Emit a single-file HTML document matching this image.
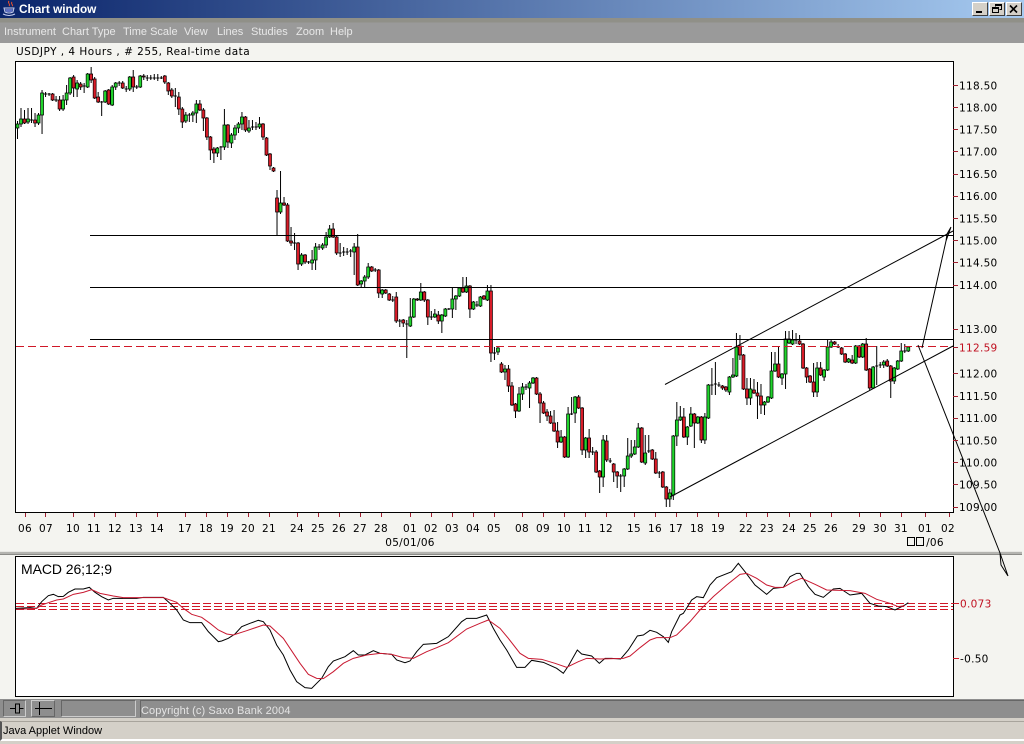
<!DOCTYPE html>
<html><head><meta charset="utf-8"><title>Chart window</title>
<style>
html,body{margin:0;padding:0;width:1024px;height:744px;overflow:hidden;background:#f4f4f0}
body{position:relative;font-family:"Liberation Sans",sans-serif}
.a{position:absolute;box-sizing:border-box}
.m{position:absolute;top:25px;font-size:11px;line-height:14px;color:#e8e8e8;white-space:nowrap}
.wb{position:absolute;top:2px;width:16px;height:14px;background:#d4d0c8;border:1px solid;border-color:#fff #404040 #404040 #fff;box-sizing:border-box}
svg{position:absolute;left:0;top:0}
</style></head>
<body>
<div class="a" style="left:0;top:0;width:1024px;height:18px;background:linear-gradient(90deg,#0a246a 0%,#a6caf0 100%)"></div>
<svg width="18" height="18" style="left:1px;top:0"><path d="M8 1c-2 2 2 3 0 5M11 2c-2 2 2 3 0 4" stroke="#e05030" fill="none"/><path d="M3 8h10l-1 4q-4 2-8 0zM2 14q6 3 12 0" fill="none" stroke="#c8d0f0"/><path d="M4 9h8l-1 3h-6z" fill="#6070c0"/></svg>
<div class="a" style="left:19px;top:2px;font-size:11.800px;line-height:14px;font-weight:bold;color:#fff;white-space:nowrap">Chart window</div>
<div class="wb" style="left:972px"><svg width="14" height="12"><path d="M3 9h6" stroke="#000" stroke-width="2"/></svg></div>
<div class="wb" style="left:989px"><svg width="14" height="12"><path d="M5.5 3.5V1.500h6v5h-2M2.500 4.500h6v5h-6zM2.500 5.500h6M5.500 2.500h6" fill="none" stroke="#000"/></svg></div>
<div class="wb" style="left:1006px"><svg width="14" height="12"><path d="M3 2.500l7 7M10 2.500l-7 7" stroke="#000" stroke-width="1.600"/></svg></div>
<div class="a" style="left:0;top:18px;width:1024px;height:25px;background:linear-gradient(180deg,#909088 0,#909088 4px,#9a9a9a 5px,#9a9a9a 100%)"></div>
<div class="m" style="left:4px">Instrument</div>
<div class="m" style="left:62px">Chart Type</div>
<div class="m" style="left:123px">Time Scale</div>
<div class="m" style="left:184px">View</div>
<div class="m" style="left:217px">Lines</div>
<div class="m" style="left:251px">Studies</div>
<div class="m" style="left:296px">Zoom</div>
<div class="m" style="left:330px">Help</div>

<div class="a" style="left:15px;top:61px;width:939px;height:452px;background:#fff;border:1px solid #000"></div>
<div class="a" style="left:0;top:551px;width:1022px;height:4px;background:#b4b4b0;border-top:1px solid #e8e8e4;border-bottom:1px solid #8c8c88"></div>
<div class="a" style="left:15px;top:556px;width:939px;height:141px;background:#fff;border:1px solid #000"></div>

<div class="a" style="left:0;top:699px;width:1024px;height:19px;background:#8e8e8e"></div>
<div class="a" style="left:3px;top:700px;width:23px;height:17px;border:1px solid;border-color:#666 #ccc #ccc #666"></div>
<div class="a" style="left:31px;top:700px;width:24px;height:17px;border:1px solid;border-color:#ccc #666 #666 #ccc"></div>
<div class="a" style="left:61px;top:700px;width:75px;height:17px;border:1px solid;border-color:#666 #ccc #ccc #666"></div>
<div class="a" style="left:140px;top:700px;width:884px;height:17px;border-left:1px solid #666;border-top:1px solid #666"></div>
<svg width="60" height="20" style="left:0;top:698px"><path d="M10 10.500h5M15.500 6v9h4v-9zM19.500 10.500h4" fill="none" stroke="#000"/><path d="M35 10.500h17M39.500 4v13" fill="none" stroke="#000"/></svg>
<div class="a" style="left:141px;top:704px;font-size:11px;line-height:14px;color:#e4e4e4;white-space:nowrap;letter-spacing:.1px">Copyright (c) Saxo Bank 2004</div>
<div class="a" style="left:0;top:718px;width:1024px;height:26px;background:#d4d0c8"></div>
<div class="a" style="left:0;top:721px;width:1024px;height:20px;background:#d4d0c8;border-left:2px solid #555;border-top:1px solid #a8a49c;border-bottom:2px solid #fff"></div>
<div class="a" style="left:3px;top:724px;font-size:11px;line-height:14px;color:#000;white-space:nowrap">Java Applet Window</div>

<svg width="1024" height="744" viewBox="0 0 1024 744">
<g font-family="'DejaVu Sans',sans-serif" font-size="10.5" fill="#000" letter-spacing=".3">
<text x="16" y="55" textLength="234" lengthAdjust="spacing">USDJPY , 4 Hours , # 255, Real-time data</text>
</g>
<g transform="translate(17.5 0) scale(1.002 1)" stroke="#000" stroke-width="1">
<path fill="none" d="M0 121V139M3.500 108V127M7 110V124M10.500 108V124M14 108V123M12.500 120h3M17.500 113V127M21 113V125M24.500 90V134M28 92V97M26.500 94h3M31.500 93V96M30 94h3M35 93V101M38.500 96V102M37 100h3M42 96V111M45.500 95V111M49 85V105M52.500 77V95M56 75V97M59.500 80V97M63 82V90M66.500 83V93M65 86h3M70 73V88M73.500 67V83M77 77V99M80.500 92V103M84 101V116M82.500 102h3M87.500 90V103M91 89V105M94.500 85V106M98 82V90M101.500 81V86M100 83h3M105 81V89M108.500 86V92M107 89h3M112 76V91M115.500 70V92M119 85V89M117.500 87h3M122.500 75V88M126 74V80M129.500 75V81M128 78h3M133 75V80M131.500 78h3M136.500 74V80M135 78h3M140 74V81M138.500 78h3M143.500 76V79M142 78h3M147 75V84M150.500 82V95M154 88V98M157.500 88V107M156 96h3M161 92V115M164.500 107V128M168 112V123M171.500 113V122M170 115h3M175 111V122M178.500 100V123M182 100V111M185.500 108V131M189 117V140M192.500 136V160M196 147V163M199.500 147V157M203 146V160M201.500 147h3M206.500 109V150M210 124V148M213.500 133V148M217 125V140M220.500 122V133M224 112V130M227.500 116V132M231 120V133M234.500 120V130M233 127h3M238 122V130M236.500 127h3M241.500 117V129M245 123V140M248.500 137V156M252 153V170M255.500 167V172M259 190V235M262.500 171V214M266 197V206M269.500 203V242M273 227V246M276.500 233V250M275 243h3M280 242V270M283.500 253V266M287 254V264M290.500 261V264M289 262h3M294 250V270M297.500 243V270M301 244V250M299.500 247h3M304.500 243V250M308 232V248M311.500 225V238M315 223V238M318.500 236V255M322 243V257M320.500 253h3M325.500 247V256M324 252h3M329 248V255M327.500 252h3M332.500 249V257M331 251h3M336 243V275M339.500 234V286M343 280V288M346.500 275V287M350 263V279M353.500 266V272M357 268V272M355.500 270h3M360.500 269V298M364 289V298M367.500 289V294M371 293V301M374.500 296V302M373 300h3M378 292V323M381.500 319V327M380 321h3M385 319V327M388.500 320V358M387 324h3M392 298V327M395.500 298V318M399 298V301M402.500 283V301M406 291V302M409.500 299V325M413 311V320M411.500 317h3M416.500 309V318M420 311V324M423.500 314V333M427 308V317M430.500 308V310M429 309h3M434 288V318M437.500 295V310M441 287V297M444.500 277V293M448 277V293M451.500 285V318M455 301V310M458.500 301V307M457 305h3M462 296V307M465.500 295V300M469 285V301M472.500 285V362M476 347V360M474.500 353h3M479.500 347V355M483 362V373M486.500 365V380M490 365V392M493.500 382V406M497 403V418M500.500 387V412M504 383V400M507.500 384V390M506 387h3M511 381V408M514.500 377V384M518 377V395M521.500 392V423M525 401V414M528.500 409V421M532 411V424M535.500 410V432M539 422V448M542.500 430V443M546 436V458M549.500 407V458M553 397V415M551.500 414h3M556.500 396V423M560 395V409M563.500 407V455M567 437V458M570.500 429V458M574 447V455M572.500 452h3M577.500 450V473M581 470V493M584.500 435V487M588 435V462M591.500 458V463M590 461h3M595 463V482M598.500 471V488M602 474V492M600.500 476h3M605.500 468V487M609 438V470M612.500 440V458M616 440V455M619.500 423V448M623 427V463M626.500 435V465M630 435V453M628.500 451h3M633.500 449V460M637 452V474M640.500 471V478M639 473h3M644 471V488M647.500 486V507M651 489V507M654.500 435V500M658 402V446M661.500 406V421M665 408V438M668.500 426V445M672 407V427M675.500 413V448M679 416V424M682.500 416V443M686 413V444M689.500 384V419M693 368V395M691.500 385h3M696.500 362V395M695 384h3M700 382V387M698.500 385h3M703.500 385V390M707 386V392M710.500 376V395M714 358V378M717.500 333V377M721 335V360M724.500 354V390M728 378V405M731.500 378V405M735 379V394M738.500 382V419M742 384V414M745.500 401V415M749 396V403M752.500 352V399M756 352V372M759.500 347V378M763 373V385M766.500 331V389M770 331V344M773.500 330V345M777 333V344M775.500 340h3M780.500 335V345M784 343V369M787.500 367V383M791 375V383M794.500 363V397M798 362V397M801.500 362V376M805 369V381M808.500 340V371M812 340V348M815.500 341V345M819 344V348M817.500 347h3M822.500 347V355M826 353V363M829.500 358V363M833 355V364M836.500 345V364M840 345V358M843.500 343V358M847 338V371M850.500 368V390M854 366V389M857.500 346V385M856 366h3M861 362V368M859.500 365h3M864.500 360V368M868 359V367M871.500 365V398M875 367V384M878.500 360V370M882 343V362M885.500 344V353M884 351h3M889 346V352"/>
<path fill="#20d42c" stroke-width=".7" d="M-1.500 124h3v4h-3zM2 119h3v5h-3zM9 119h3v3h-3zM19.500 115h3v8h-3zM23 93h3v22h-3zM44 100h3v9h-3zM47.500 93h3v7h-3zM51 78h3v15h-3zM58 83h3v6h-3zM68.500 74h3v13h-3zM86 91h3v11h-3zM93 87h3v18h-3zM96.500 83h3v4h-3zM110.500 77h3v12h-3zM121 76h3v11h-3zM166.500 115h3v6h-3zM173.500 113h3v2h-3zM177 104h3v9h-3zM198 148h3v5h-3zM205 125h3v22h-3zM212 135h3v8h-3zM215.500 128h3v7h-3zM219 124h3v4h-3zM222.500 117h3v7h-3zM229.500 128h3v3h-3zM240 124h3v3h-3zM261 203h3v9h-3zM282 255h3v9h-3zM292.500 260h3v3h-3zM296 247h3v13h-3zM303 245h3v3h-3zM306.500 237h3v8h-3zM310 229h3v8h-3zM334.500 247h3v5h-3zM341.500 281h3v3h-3zM345 277h3v4h-3zM348.500 267h3v10h-3zM362.500 290h3v4h-3zM390.500 317h3v9h-3zM394 299h3v18h-3zM401 292h3v8h-3zM415 314h3v3h-3zM422 315h3v6h-3zM425.500 309h3v7h-3zM432.500 299h3v10h-3zM436 296h3v3h-3zM439.500 288h3v8h-3zM446.500 286h3v6h-3zM453.500 302h3v7h-3zM460.500 297h3v9h-3zM467.500 291h3v9h-3zM478 348h3v4h-3zM485 369h3v3h-3zM499 394h3v17h-3zM502.500 387h3v7h-3zM509.500 383h3v5h-3zM513 378h3v5h-3zM541 437h3v5h-3zM548 414h3v43h-3zM555 397h3v16h-3zM565.500 438h3v12h-3zM583 440h3v37h-3zM604 469h3v7h-3zM607.500 456h3v13h-3zM611 454h3v2h-3zM614.500 447h3v7h-3zM618 428h3v19h-3zM625 453h3v10h-3zM649.500 493h3v6h-3zM653 436h3v59h-3zM656.500 420h3v16h-3zM660 417h3v3h-3zM667 427h3v10h-3zM670.500 414h3v12h-3zM677.500 417h3v6h-3zM684.500 417h3v23h-3zM688 385h3v33h-3zM709 377h3v15h-3zM712.500 375h3v2h-3zM716 347h3v29h-3zM730 389h3v9h-3zM744 402h3v3h-3zM747.500 397h3v5h-3zM751 371h3v27h-3zM754.500 364h3v7h-3zM761.500 374h3v4h-3zM765 339h3v35h-3zM768.500 339h3v4h-3zM772 340h3v4h-3zM796.500 368h3v24h-3zM803.500 370h3v7h-3zM807 347h3v23h-3zM810.500 342h3v5h-3zM828 359h3v3h-3zM835 346h3v17h-3zM842 344h3v13h-3zM852.500 367h3v21h-3zM863 362h3v3h-3zM873.500 368h3v13h-3zM877 361h3v8h-3zM880.500 351h3v10h-3zM887.500 347h3v4h-3z"/>
<path fill="#d81c28" stroke-width=".7" d="M5.500 119h3v4h-3zM16 120h3v3h-3zM33.500 94h3v6h-3zM40.500 100h3v9h-3zM54.500 77h3v11h-3zM61.500 84h3v3h-3zM72 74h3v6h-3zM75.500 79h3v19h-3zM79 97h3v5h-3zM89.500 90h3v14h-3zM103.500 83h3v5h-3zM114 77h3v10h-3zM124.500 76h3v1h-3zM145.500 76h3v6h-3zM149 83h3v8h-3zM152.500 90h3v6h-3zM159.500 97h3v12h-3zM163 109h3v13h-3zM180.500 104h3v6h-3zM184 110h3v8h-3zM187.500 118h3v19h-3zM191 137h3v13h-3zM194.500 149h3v4h-3zM208.500 125h3v17h-3zM226 117h3v13h-3zM243.500 124h3v13h-3zM247 138h3v17h-3zM250.500 154h3v12h-3zM254 168h3v3h-3zM257.500 198h3v14h-3zM264.500 203h3v2h-3zM268 205h3v36h-3zM271.500 241h3v2h-3zM278.500 243h3v21h-3zM285.500 255h3v7h-3zM313.500 229h3v8h-3zM317 237h3v16h-3zM338 247h3v38h-3zM352 267h3v4h-3zM359 270h3v23h-3zM366 290h3v3h-3zM369.500 294h3v6h-3zM376.500 297h3v24h-3zM383.500 320h3v3h-3zM397.500 299h3v1h-3zM404.500 292h3v8h-3zM408 300h3v17h-3zM418.500 315h3v6h-3zM443 288h3v4h-3zM450 286h3v23h-3zM464 296h3v3h-3zM471 291h3v62h-3zM481.500 364h3v8h-3zM488.500 369h3v17h-3zM492 386h3v19h-3zM495.500 404h3v7h-3zM516.500 378h3v16h-3zM520 394h3v9h-3zM523.500 403h3v10h-3zM527 412h3v4h-3zM530.500 416h3v7h-3zM534 423h3v8h-3zM537.500 431h3v11h-3zM544.500 437h3v20h-3zM558.500 397h3v11h-3zM562 408h3v42h-3zM569 438h3v14h-3zM576 452h3v20h-3zM579.500 471h3v6h-3zM586.500 441h3v19h-3zM593.500 464h3v8h-3zM597 472h3v4h-3zM621.500 428h3v34h-3zM632 450h3v9h-3zM635.500 459h3v14h-3zM642.500 472h3v15h-3zM646 487h3v12h-3zM663.500 417h3v20h-3zM674 414h3v9h-3zM681 417h3v23h-3zM702 386h3v2h-3zM705.500 387h3v3h-3zM719.500 346h3v9h-3zM723 355h3v34h-3zM726.500 389h3v9h-3zM733.500 390h3v3h-3zM737 393h3v3h-3zM740.500 396h3v9h-3zM758 364h3v13h-3zM779 341h3v3h-3zM782.500 344h3v24h-3zM786 368h3v9h-3zM789.500 376h3v6h-3zM793 382h3v10h-3zM800 368h3v7h-3zM814 342h3v2h-3zM821 348h3v6h-3zM824.500 354h3v8h-3zM831.500 360h3v3h-3zM838.500 346h3v11h-3zM845.500 344h3v26h-3zM849 369h3v19h-3zM866.500 361h3v5h-3zM870 366h3v15h-3z"/>
</g>
<g shape-rendering="crispEdges" stroke="#000" fill="none">
<path d="M90 235.500H953M90 287.500H953M90 339.500H953"/>
</g>
<path d="M16 346.500H953" stroke="#d01828" stroke-dasharray="8 4" fill="none"/>
<path d="M665 384.500L953 231M670 497L953 346" stroke="#000" fill="none"/>
<path d="M922 348L946 241L951 227M946 241L947 234L951 227" stroke="#000" fill="none"/>
<path d="M918 345L1000 553L1008 576M1000 553L1001 565L1008 576" stroke="#000" fill="none"/>

<g stroke="#a02030" fill="none" shape-rendering="crispEdges">
<path d="M953 85.500h5M953 107.500h5M953 129.500h5M953 151.500h5M953 174.500h5M953 196.500h5M953 218.500h5M953 240.500h5M953 262.500h5M953 285.500h5M953 329.500h5M953 347.500h5M953 373.500h5M953 396.500h5M953 418.500h5M953 440.500h5M953 462.500h5M953 484.500h5M953 507.500h5"/>
<path d="M25.500 513v4M45.500 513v4M73.500 513v4M94.500 513v4M115.500 513v4M136.500 513v4M157.500 513v4M185.500 513v4M206.500 513v4M227.500 513v4M248.500 513v4M269.500 513v4M297.500 513v4M318.500 513v4M339.500 513v4M360.500 513v4M381.500 513v4M410.500 513v4M431.500 513v4M452.500 513v4M473.500 513v4M494.500 513v4M522.500 513v4M543.500 513v4M564.500 513v4M585.500 513v4M606.500 513v4M634.500 513v4M655.500 513v4M676.500 513v4M697.500 513v4M718.500 513v4M746.500 513v4M767.500 513v4M789.500 513v4M810.500 513v4M831.500 513v4M859.500 513v4M880.500 513v4M901.500 513v4M925.500 513v4M949.500 513v4"/>
<path d="M953 603.500h6M953 658.500h6" stroke="#d01828"/>
</g>
<g font-family="'DejaVu Sans',sans-serif" font-size="10.5" fill="#000" letter-spacing=".3">
<text x="959" y="89.500">118.50</text><text x="959" y="111.500">118.00</text><text x="959" y="133.500">117.50</text><text x="959" y="155.500">117.00</text><text x="959" y="178">116.50</text><text x="959" y="200">116.00</text><text x="959" y="222.500">115.50</text><text x="959" y="244.500">115.00</text><text x="959" y="266.500">114.50</text><text x="959" y="289">114.00</text><text x="959" y="333">113.00</text><text x="959" y="351.500" fill="#c01020">112.59</text><text x="959" y="377.500">112.00</text><text x="959" y="400">111.50</text><text x="959" y="422">111.00</text><text x="959" y="444.500">110.50</text><text x="959" y="466.500">110.00</text><text x="959" y="488.500">109.50</text><text x="959" y="511">109.00</text>
<text x="960" y="607.500" fill="#c01020">0.073</text><text x="960" y="662.500">-0.50</text>
<g text-anchor="middle">
<text x="25" y="532">06</text><text x="46" y="532">07</text><text x="73" y="532">10</text><text x="94" y="532">11</text><text x="115" y="532">12</text><text x="136" y="532">13</text><text x="157" y="532">14</text><text x="185" y="532">17</text><text x="206" y="532">18</text><text x="227" y="532">19</text><text x="248" y="532">20</text><text x="269" y="532">21</text><text x="297" y="532">24</text><text x="318" y="532">25</text><text x="339" y="532">26</text><text x="360" y="532">27</text><text x="381" y="532">28</text><text x="410" y="532">01</text><text x="431" y="532">02</text><text x="452" y="532">03</text><text x="473" y="532">04</text><text x="494" y="532">05</text><text x="522" y="532">08</text><text x="543" y="532">09</text><text x="564" y="532">10</text><text x="585" y="532">11</text><text x="606" y="532">12</text><text x="634" y="532">15</text><text x="655" y="532">16</text><text x="676" y="532">17</text><text x="697" y="532">18</text><text x="718" y="532">19</text><text x="746" y="532">22</text><text x="767" y="532">23</text><text x="789" y="532">24</text><text x="810" y="532">25</text><text x="831" y="532">26</text><text x="859" y="532">29</text><text x="880" y="532">30</text><text x="901" y="532">31</text><text x="925" y="532">01</text><text x="948" y="532">02</text>
<text x="410" y="546">05/01/06</text>
</g>
<text x="935" y="546" text-anchor="middle">/06</text>
</g>
<path d="M907.500 537.500h7v8h-7zM916.500 537.500h7v8h-7z" fill="none" stroke="#000"/>
<text x="21" y="574" font-family="'Liberation Sans',sans-serif" font-size="14" fill="#000" textLength="91">MACD 26;12;9</text>

<path d="M16 603.500H953M16 606.500H953M16 609.500H953" stroke="#d01828" stroke-dasharray="8 3" fill="none" shape-rendering="crispEdges"/>
<g transform="translate(0 555) scale(.33333)" fill="none" stroke-width="3">
<polyline stroke="#000" points="48,160 90,158 110,160 125,140 145,122 160,118 175,125 190,124 205,112 225,102 250,102 268,97 285,112 305,125 325,135 340,130 380,130 410,130 430,127 490,127 510,145 530,165 550,195 570,203 605,203 625,230 655,260 665,258 685,250 705,237 725,215 750,205 775,196 790,200 810,225 830,270 850,300 870,345 890,380 915,398 935,400 950,385 965,370 985,335 1000,318 1035,305 1060,287 1075,300 1095,300 1120,287 1140,295 1175,298 1190,315 1215,323 1230,318 1250,290 1270,268 1310,265 1345,245 1385,200 1400,190 1430,190 1460,180 1480,220 1500,255 1520,285 1550,337 1575,337 1595,316 1630,322 1670,340 1690,355 1705,333 1732,285 1745,297 1775,303 1798,325 1815,310 1835,310 1862,312 1885,285 1912,243 1930,240 1950,226 1970,232 1990,245 2005,262 2015,230 2040,180 2050,175 2075,135 2090,125 2110,128 2130,90 2150,68 2195,50 2215,25 2235,50 2265,90 2300,118 2320,100 2350,97 2370,65 2390,55 2400,55 2425,95 2445,118 2470,127 2500,102 2520,100 2550,120 2585,115 2610,145 2635,153 2660,155 2685,165 2715,150 2725,143"/>
<polyline stroke="#c81830" points="48,163 110,160 125,150 145,143 170,135 190,132 220,118 250,112 275,104 300,115 340,123 370,128 490,128 530,142 550,160 575,178 605,187 630,205 655,225 680,237 700,240 740,227 790,210 810,213 850,250 880,295 900,325 925,358 950,370 970,371 1000,350 1030,325 1060,310 1100,300 1140,295 1175,298 1210,308 1240,310 1280,290 1310,278 1345,263 1400,222 1440,205 1465,195 1500,220 1525,250 1560,295 1585,310 1625,313 1665,325 1700,337 1735,320 1760,310 1800,312 1870,310 1890,303 1920,278 1950,255 1970,248 2010,248 2030,240 2070,200 2100,165 2140,125 2180,90 2220,58 2240,55 2270,70 2300,90 2325,97 2350,97 2380,80 2405,70 2445,88 2480,105 2550,107 2595,115 2630,133 2670,145 2695,155 2715,152"/>
</g>
</svg>
</body></html>
